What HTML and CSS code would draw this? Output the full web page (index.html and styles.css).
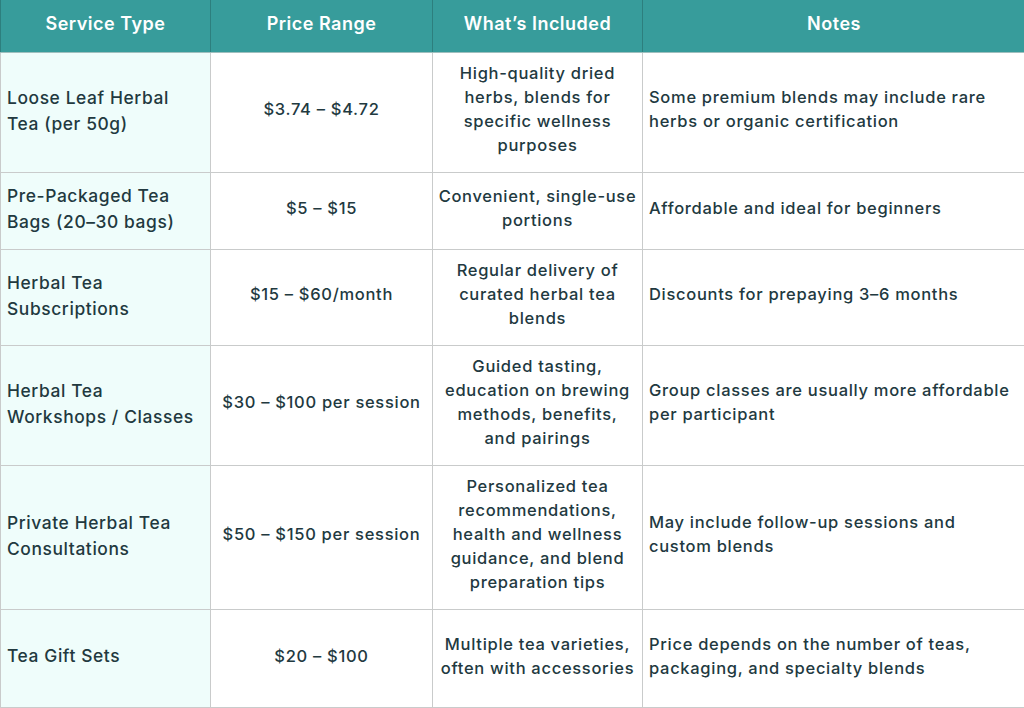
FILE: index.html
```html
<!DOCTYPE html>
<html lang="en">
<head>
<meta charset="utf-8">
<title>Herbal Tea Services</title>
<link rel="stylesheet" href="styles.css">
</head>
<body>
<table class="tea-table">
  <colgroup>
    <col class="c1"><col class="c2"><col class="c3"><col class="c4">
  </colgroup>
  <thead>
    <tr>
      <th>Service Type</th>
      <th>Price Range</th>
      <th>What’s Included</th>
      <th>Notes</th>
    </tr>
  </thead>
  <tbody>
    <tr>
      <td class="svc">Loose Leaf Herbal<br>Tea (per 50g)</td>
      <td class="ctr">$3.74 – $4.72</td>
      <td class="ctr">High-quality dried<br>herbs, blends for<br>specific wellness<br>purposes</td>
      <td>Some premium blends may include rare<br>herbs or organic certification</td>
    </tr>
    <tr>
      <td class="svc">Pre-Packaged Tea<br>Bags (20–30 bags)</td>
      <td class="ctr">$5 – $15</td>
      <td class="ctr">Convenient, single-use<br>portions</td>
      <td>Affordable and ideal for beginners</td>
    </tr>
    <tr>
      <td class="svc">Herbal Tea<br>Subscriptions</td>
      <td class="ctr">$15 – $60/month</td>
      <td class="ctr">Regular delivery of<br>curated herbal tea<br>blends</td>
      <td>Discounts for prepaying 3–6 months</td>
    </tr>
    <tr>
      <td class="svc">Herbal Tea<br>Workshops / Classes</td>
      <td class="ctr">$30 – $100 per session</td>
      <td class="ctr">Guided tasting,<br>education on brewing<br>methods, benefits,<br>and pairings</td>
      <td>Group classes are usually more affordable<br>per participant</td>
    </tr>
    <tr>
      <td class="svc">Private Herbal Tea<br>Consultations</td>
      <td class="ctr">$50 – $150 per session</td>
      <td class="ctr">Personalized tea<br>recommendations,<br>health and wellness<br>guidance, and blend<br>preparation tips</td>
      <td>May include follow-up sessions and<br>custom blends</td>
    </tr>
    <tr class="last">
      <td class="svc">Tea Gift Sets</td>
      <td class="ctr">$20 – $100</td>
      <td class="ctr">Multiple tea varieties,<br>often with accessories</td>
      <td>Price depends on the number of teas,<br>packaging, and specialty blends</td>
    </tr>
  </tbody>
</table>
</body>
</html>
```

FILE: styles.css
```css
html, body {
  margin: 0;
  padding: 0;
  background: #ffffff;
}
.tea-table {
  width: 1025px;
  table-layout: fixed;
  border-collapse: collapse;
  font-family: "Inter", "Liberation Sans", sans-serif;
  font-weight: 500;
  color: #22393f;
}
.c1 { width: 210px; }
.c2 { width: 222px; }
.c3 { width: 210px; }
.c4 { width: 383px; }

.tea-table th {
  background: #379c9b;
  color: #ffffff;
  font-weight: 600;
  font-size: 18px;
  letter-spacing: 0.5px;
  height: 47px;
  padding: 0 4px 5px;
  text-align: center;
  border-left: 1px solid #2d7f7e;
  border-right: 1px solid #2d7f7e;
  border-bottom: 1px solid #9fbfbe;
}
.tea-table td {
  border: 1px solid #c9cbcb;
  padding: 8px 6px 15px;
  font-size: 16.5px;
  letter-spacing: 0.7px;
  line-height: 24px;
  vertical-align: middle;
  text-align: left;
}
.tea-table td.ctr {
  text-align: center;
  padding-left: 2px;
  padding-right: 2px;
}
.tea-table td.svc {
  background: #effdfb;
  font-size: 17.4px;
  letter-spacing: 0.6px;
  line-height: 26px;
  padding-top: 10px;
  padding-bottom: 14px;
}
.tea-table tr.last td {
  height: 67px;
  padding-top: 12px;
  padding-bottom: 18px;
}
```
